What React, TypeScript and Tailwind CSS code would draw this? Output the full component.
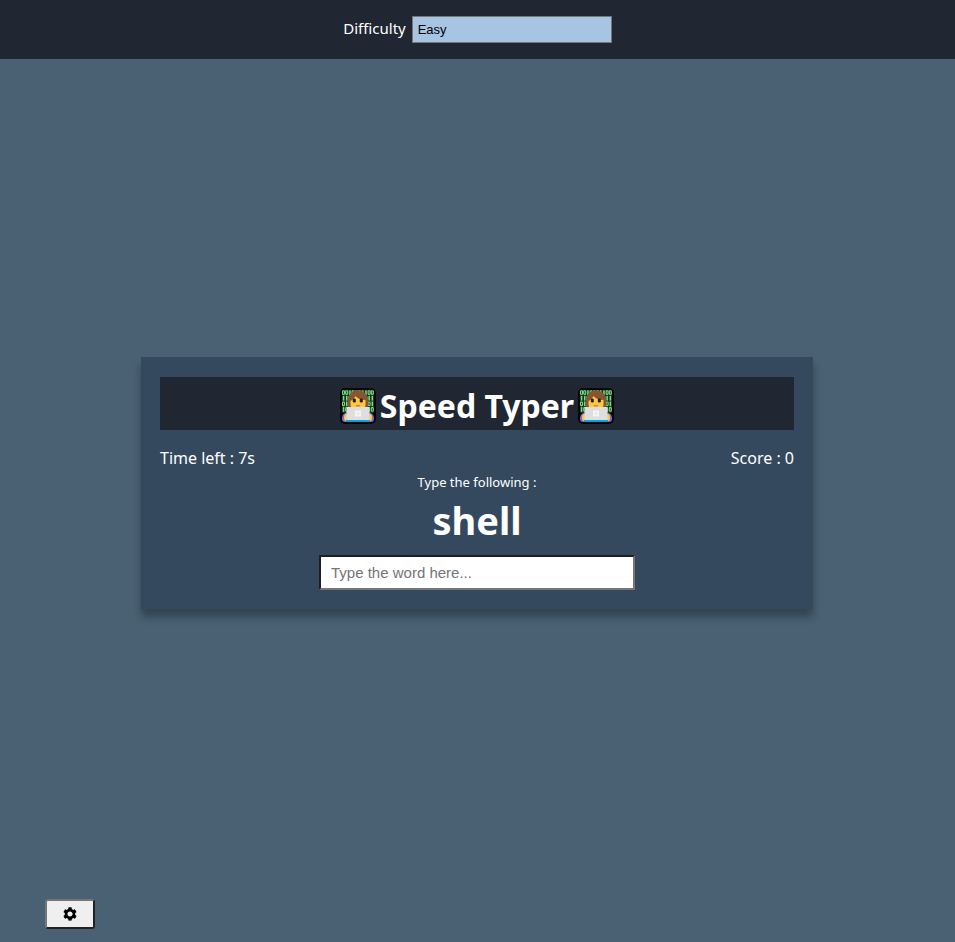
import { useState } from "react";

const DIGIT_ROWS = ["0010101100", "1101011011", "0110010101", "1001101110"];

function Technologist() {
  return (
    <svg className="size-9 shrink-0" viewBox="0 0 36 36" aria-hidden="true">
      <rect width="36" height="36" rx="5" fill="#050608" />
      <rect x="2" y="2" width="32" height="23" rx="1" fill="#18351f" />
      {DIGIT_ROWS.map((row, r) =>
        row.split("").map((digit, c) => {
          const x = 2.5 + c * 3.2;
          const y = 2.8 + r * 5.6;
          return digit === "0" ? (
            <rect
              key={`${r}-${c}`}
              x={x}
              y={y}
              width="2"
              height="3.6"
              rx="0.8"
              fill="none"
              stroke="#78dc80"
              strokeWidth="1.1"
            />
          ) : (
            <rect key={`${r}-${c}`} x={x + 0.3} y={y - 0.5} width="1.5" height="4.7" fill="#78dc80" />
          );
        }),
      )}
      <path d="M2 31c0-5 3-7 8-7h16c5 0 8 2 8 7 0 2-1 3-3 3H5c-2 0-3-1-3-3z" fill="#8664e0" />
      <path d="M8 20C7 10 9 2.500 18 2.500S29 10 28 20z" fill="#8a5430" />
      <path d="M10.500 13c2-1 4-3 5-5 2.500 3 6.500 4 10 4v4c0 5-3 7-7.500 7s-7.500-3-7.500-7z" fill="#ffc83d" />
      <rect x="12.800" y="10.500" width="3" height="4" rx="1.300" fill="#20191a" />
      <rect x="19.800" y="10.500" width="3" height="4" rx="1.300" fill="#20191a" />
      <path d="M15.500 17h5l-1 1.500h-3z" fill="#f0704c" />
      <ellipse cx="6" cy="29.500" rx="2" ry="3.500" fill="#ffc83d" />
      <ellipse cx="30" cy="29.500" rx="2" ry="3.500" fill="#ffc83d" />
      <rect x="6.500" y="19" width="23" height="13" rx="1" fill="#dedede" />
      <path d="M15 22.500h2.700v2.700H15zM18.300 22.500H21v2.700h-2.700zM15 25.800h2.700v2.700H15zM18.300 25.800H21v2.700h-2.700z" fill="#f7f7f7" />
      <rect x="6" y="32" width="24" height="2" fill="#00a6e0" />
    </svg>
  );
}

function GearIcon() {
  return (
    <svg className="size-3.5" viewBox="0 0 512 512" fill="#000" aria-hidden="true">
      <path d="M487.400 315.700l-42.600-24.600c4.300-23.200 4.300-47 0-70.200l42.600-24.600c4.900-2.800 7.100-8.600 5.500-14-11.100-35.600-30-67.800-54.700-94.600-3.800-4.100-10-5.100-14.800-2.300L380.800 110c-17.900-15.400-38.500-27.300-60.800-35.100V25.800c0-5.600-3.900-10.500-9.400-11.700-36.700-8.200-74.300-7.800-109.200 0-5.500 1.200-9.400 6.100-9.400 11.700V75c-22.200 7.900-42.800 19.800-60.800 35.100L88.700 85.500c-4.900-2.800-11-1.900-14.800 2.300-24.700 26.700-43.600 58.900-54.700 94.600-1.700 5.400.6 11.200 5.500 14L67.300 221c-4.300 23.200-4.300 47 0 70.200l-42.600 24.600c-4.900 2.800-7.100 8.600-5.500 14 11.100 35.600 30 67.800 54.700 94.600 3.800 4.100 10 5.100 14.800 2.300l42.600-24.600c17.900 15.400 38.500 27.300 60.800 35.100v49.200c0 5.600 3.900 10.500 9.400 11.700 36.700 8.200 74.300 7.800 109.200 0 5.500-1.200 9.400-6.100 9.400-11.700v-49.200c22.200-7.900 42.800-19.800 60.800-35.100l42.600 24.600c4.900 2.800 11 1.900 14.800-2.300 24.700-26.700 43.600-58.900 54.700-94.600 1.500-5.500-.7-11.300-5.600-14.100zM256 350c-51.900 0-94-42.100-94-94s42.100-94 94-94 94 42.100 94 94-42.100 94-94 94z" />
    </svg>
  );
}

export default function App() {
  const [difficulty, setDifficulty] = useState("easy");
  const [word, setWord] = useState("");

  return (
    <div className="flex min-h-screen flex-col bg-[#496173] font-['Noto_Sans','Open_Sans',sans-serif] text-white">
      <header className="flex items-start justify-center gap-1.5 bg-[#202733] py-4">
        <label htmlFor="difficulty" className="text-[15px] leading-6">
          Difficulty
        </label>
        <select
          id="difficulty"
          value={difficulty}
          onChange={(e) => setDifficulty(e.target.value)}
          className="h-[27px] w-[200px] appearance-none border border-[#767676] bg-[#a7c4e3] px-[5px] font-['Liberation_Sans',Arial,sans-serif] text-[13px] leading-4 text-black"
        >
          <option value="easy">Easy</option>
          <option value="medium">Medium</option>
          <option value="hard">Hard</option>
        </select>
      </header>

      <main className="flex flex-1 items-center justify-center pt-2 pr-px">
        <section className="flex w-full max-w-2xl flex-col items-center bg-[#34495e] p-[19px] pt-5 shadow-[0_8px_8px_rgba(0,0,0,0.3)]">
          <h1 className="flex h-[53px] w-full items-center justify-center gap-1 bg-[#202733] pt-1 text-[32px] leading-10 font-bold">
            <Technologist />
            <span>Speed Typer</span>
            <Technologist />
          </h1>
          <div className="mt-4 flex w-full justify-between text-base leading-6">
            <p>Time left : 7s</p>
            <p>Score : 0</p>
          </div>
          <p className="mt-0.5 text-[13px] leading-5">Type the following :</p>
          <h2 className="text-[38px] leading-[56px] font-bold">shell</h2>
          <input
            type="text"
            aria-label="Type the word here"
            placeholder="Type the word here..."
            value={word}
            onChange={(e) => setWord(e.target.value)}
            className="mt-[7px] h-[35px] w-[316px] border-2 border-t-[#1e1e1e] border-r-[#767676] border-b-[#767676] border-l-[#1e1e1e] bg-white px-2.5 font-['Liberation_Sans',Arial,sans-serif] text-[15px] text-black placeholder:text-[#757575]"
          />
        </section>
      </main>

      <footer className="flex px-[45px] pb-[13px]">
        <button
          type="button"
          aria-label="Settings"
          className="flex h-[30px] w-[50px] items-center justify-center rounded-[3px] border-2 border-t-[#767676] border-r-[#212121] border-b-[#212121] border-l-[#767676] bg-[#efefef]"
        >
          <GearIcon />
        </button>
      </footer>
    </div>
  );
}
